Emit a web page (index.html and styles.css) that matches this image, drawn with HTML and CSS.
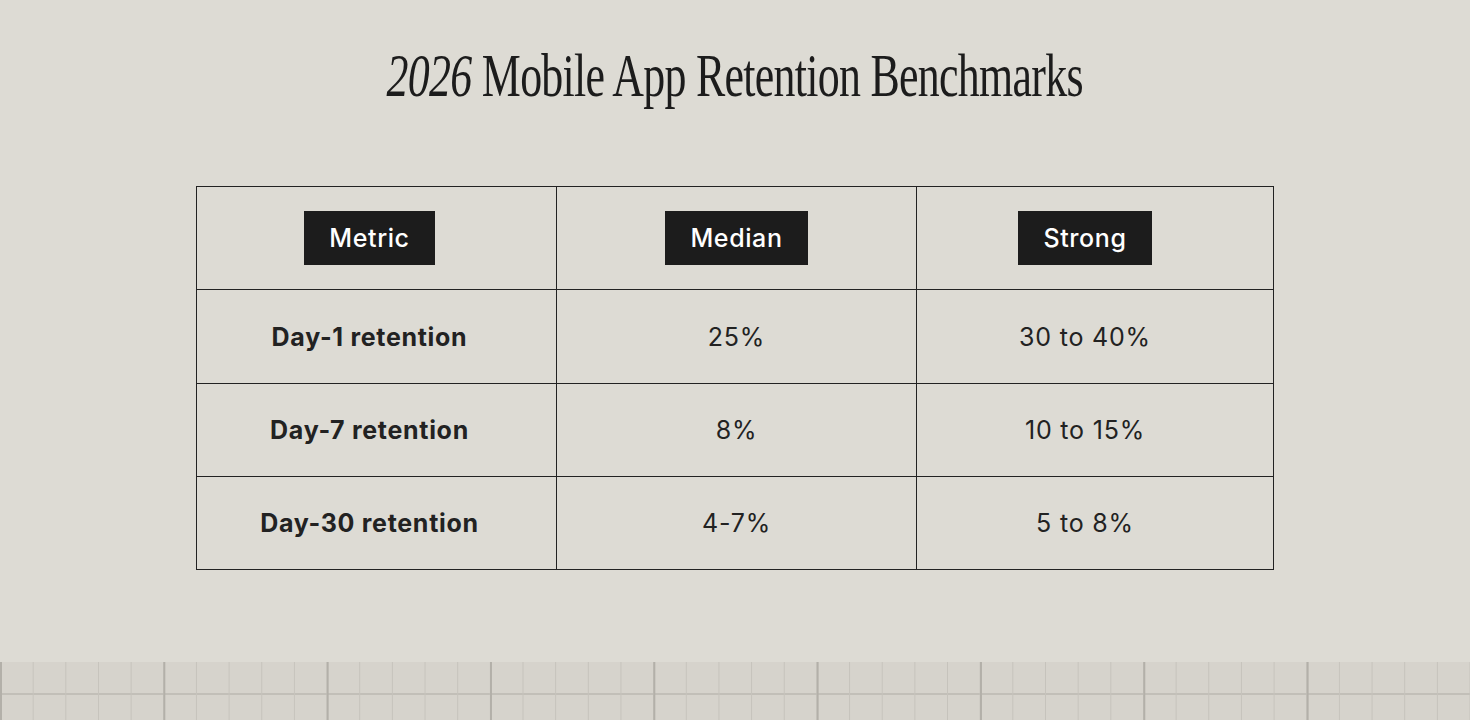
FILE: index.html
```html
<!DOCTYPE html>
<html lang="en">
<head>
<meta charset="utf-8">
<title>2026 Mobile App Retention Benchmarks</title>
<link rel="stylesheet" href="styles.css">
</head>
<body>
<main class="page">
  <h1 class="title"><em>2026</em> Mobile App Retention Benchmarks</h1>
  <table class="bench">
    <colgroup>
      <col class="c1">
      <col class="c2">
      <col class="c3">
    </colgroup>
    <thead>
      <tr>
        <th class="col1"><span class="badge">Metric</span></th>
        <th class="col2"><span class="badge">Median</span></th>
        <th class="col3"><span class="badge">Strong</span></th>
      </tr>
    </thead>
    <tbody>
      <tr><td class="col1 metric first">Day-1 retention</td><td class="col2 first">25%</td><td class="col3 first">30 to 40%</td></tr>
      <tr><td class="col1 metric">Day-7 retention</td><td class="col2">8%</td><td class="col3">10 to 15%</td></tr>
      <tr><td class="col1 metric">Day-30 retention</td><td class="col2">4-7%</td><td class="col3">5 to 8%</td></tr>
    </tbody>
  </table>
</main>
<div class="grid"></div>
</body>
</html>
```

FILE: styles.css
```css
html, body {
  margin: 0;
  padding: 0;
}
body {
  background: #dddbd4;
  color: #1e1e1e;
  font-family: Inter, "Liberation Sans", sans-serif;
  height: 720px;
  overflow: hidden;
  display: flex;
  flex-direction: column;
}
.page {
  flex: 1;
  display: flex;
  flex-direction: column;
  align-items: center;
  padding-top: 40px;
}
.title {
  margin: 0;
  font-family: "Liberation Serif", "Times New Roman", serif;
  font-weight: 400;
  font-size: 62px;
  line-height: 70px;
  letter-spacing: -1px;
  color: #1c1c1c;
  white-space: nowrap;
  transform: scaleX(0.708);
}
.title em {
  font-style: italic;
}
.bench {
  margin-top: 76px;
  width: 1077px;
  border-collapse: collapse;
  table-layout: fixed;
}
.c1, .c2 {
  width: 360px;
}
.c3 {
  width: 357px;
}
.bench th, .bench td {
  border: 1.5px solid #222;
  text-align: center;
  vertical-align: middle;
  padding: 0;
  font-size: 25px;
  letter-spacing: 0.8px;
}
.bench .col1 {
  padding-right: 14px;
}
.bench .col3 {
  padding-right: 20px;
}
.bench th {
  height: 102px;
}
.bench td {
  height: 92px;
  font-weight: 400;
  color: #222;
}
.bench td.first {
  height: 93px;
}
.bench td.metric {
  font-weight: 700;
  letter-spacing: 0.7px;
}
.badge {
  display: inline-block;
  background: #1c1c1c;
  color: #fff;
  font-weight: 500;
  font-size: 25px;
  letter-spacing: 0.6px;
  line-height: 54px;
  padding: 0 25px;
}
.grid {
  height: 58px;
  background-color: #d6d3cc;
  background-image:
    linear-gradient(to right, #b3b0a9 1.5px, transparent 1.5px),
    linear-gradient(to right, #c6c3bc 1px, transparent 1px),
    linear-gradient(to bottom, transparent 31.5px, #c2bfb8 31.5px, #c2bfb8 33px, transparent 33px);
  background-size: 163.333px 100%, 32.667px 100%, 100% 100%;
  background-repeat: repeat-x, repeat-x, no-repeat;
}
```
